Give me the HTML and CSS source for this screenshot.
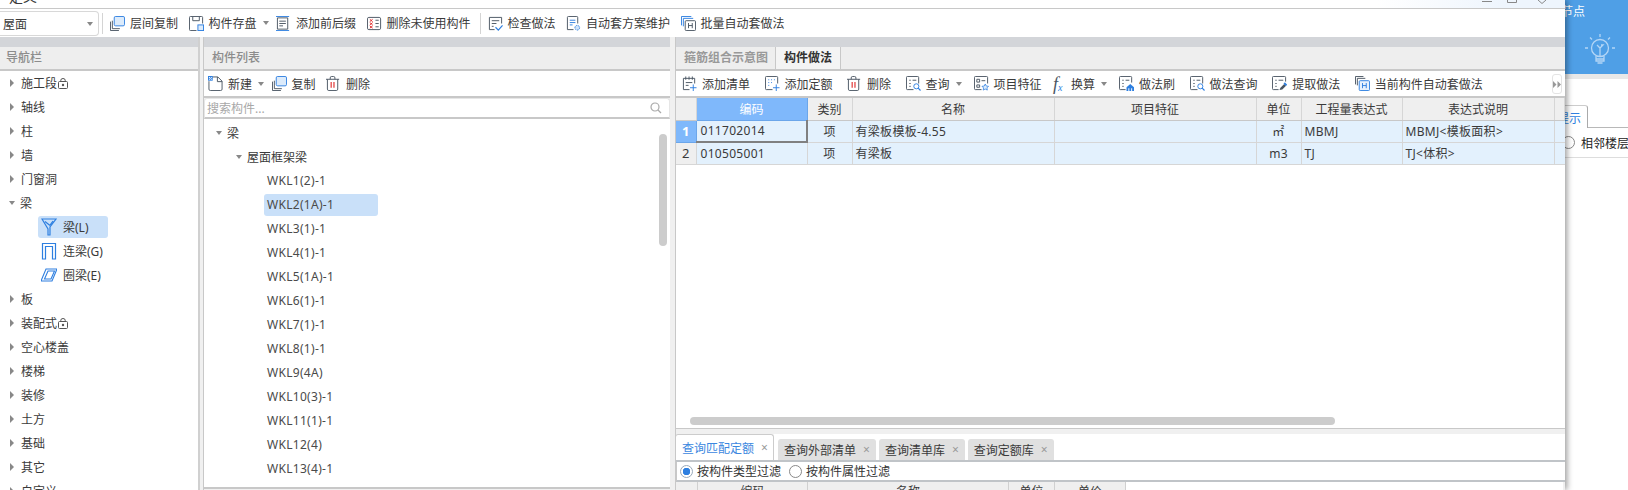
FILE: index.html
```html
<!DOCTYPE html>
<html lang="zh-CN">
<head>
    <meta charset="UTF-8">
    <title>定义</title>
    <link rel="stylesheet" href="styles.css">
</head>
<body>
<svg class="sprite" xmlns="http://www.w3.org/2000/svg">
    <symbol id="i-copy" viewBox="0 0 16 16"><path d="M.5 6v9.500h9M2.500 5v8.500h8" fill="none" stroke="#4a5562"/><rect x="4.500" y=".5" width="11" height="10" rx="1.500" fill="#dcebfb" stroke="#2e7fe0"/></symbol>
    <symbol id="i-save" viewBox="0 0 16 16"><path d="M8 15.500H1.500a1 1 0 0 1-1-1v-13a1 1 0 0 1 1-1h12a1 1 0 0 1 1 1V8M4 1v4h7V1" fill="none" stroke="#4a5562"/><rect x="9.500" y="9.500" width="6" height="6" fill="#dcebfb" stroke="#2e7fe0"/></symbol>
    <symbol id="i-prefix" viewBox="0 0 16 16"><path d="M0 .5h14M0 15.500h14" stroke="#2e7fe0"/><path d="M1.500 2v12h11V2zM3.500 5.500h7M3.500 8h7M3.500 10.500h4" fill="none" stroke="#4a5562"/></symbol>
    <symbol id="i-unused" viewBox="0 0 16 16"><rect x=".5" y="1.500" width="14" height="13" rx="1.500" fill="none" stroke="#4a5562"/><path d="M3 3.500l3 2.500m0-2.500L3 6M3 7l3 2.500M6 7L3 9.500M3 10.500l3 2.500m0-2.500L3 13" stroke="#e02a2a"/><path d="M9 4.500h3.500M9 8h3.500M9 11.500h3.500" stroke="#4a5562"/></symbol>
    <symbol id="i-check" viewBox="0 0 16 16"><path d="M7 14.500H1.500v-13h13V8M4 5h8M4 8h5M4 11h2" fill="none" stroke="#4a5562"/><path d="M8 12l3 3 4.500-5" fill="none" stroke="#2e7fe0" stroke-width="1.300"/></symbol>
    <symbol id="i-auto" viewBox="0 0 16 16"><path d="M8 14.500H1.500v-13a1 1 0 0 1 1-1h9a1 1 0 0 1 1 1V8" fill="none" stroke="#4a5562"/><path d="M4 4.500h6M4 7h6M4 9.500h3" stroke="#2e7fe0"/><circle cx="12" cy="12.500" r="2.500" fill="#cfe3fa" stroke="#2e7fe0" stroke-dasharray="1.500 .8"/></symbol>
    <symbol id="i-batch" viewBox="0 0 16 16"><path d="M.5 10V.5H11M2.500 11V2.500H13" fill="none" stroke="#2e7fe0"/><rect x="4.500" y="5" width="11" height="10.500" rx="1" fill="#fff" stroke="#4a5562"/><path d="M8 7.500v5.500M12 7.500v5.500M8 10.200h4" stroke="#4a5562"/></symbol>
    <symbol id="i-new" viewBox="0 0 16 16"><path d="M4 1H10.500L15 5.500V14a1.500 1.500 0 0 1-1.500 1.500h-11A1.500 1.500 0 0 1 1 14V5.500M10 1v5h5" fill="none" stroke="#4a5562"/><path d="M0 0h5v5H0z" fill="#2e7fe0"/><path d="M1 1h1v1H1zM3 1h1v1H3zM2 2h1v1H2zM1 3h1v1H1zM3 3h1v1H3z" fill="#fff"/></symbol>
    <symbol id="i-trash" viewBox="0 0 16 16"><path d="M0 3.500h14M4.500 3.500V2a1.500 1.500 0 0 1 1.500-1.500h2A1.500 1.500 0 0 1 9.500 2v1.500M1.500 3.500V14A1.500 1.500 0 0 0 3 15.500h8a1.500 1.500 0 0 0 1.500-1.500V3.500" fill="none" stroke="#4a5562"/><path d="M5.500 6.500v6M8.500 6.500v6" stroke="#e02a2a" stroke-width="1.200"/></symbol>
    <symbol id="i-addlist" viewBox="0 0 16 16"><path d="M8 14.500H1.500V2.500h12V8M4 .5v3.500M7.500.5v3.500M11 .5v3.500M4 7h7M4 10h3" fill="none" stroke="#4a5562"/><path d="M12 9v7M8.500 12.500h7" stroke="#2e7fe0"/></symbol>
    <symbol id="i-addquota" viewBox="0 0 16 16"><path d="M8 14.500H1.500a1 1 0 0 1-1-1v-12a1 1 0 0 1 1-1h11a1 1 0 0 1 1 1V8" fill="none" stroke="#4a5562"/><path d="M3.500 4h1M6.500 4h1M9.500 4h1M3.500 7h1M6.500 7h1M3.500 10h1" stroke="#2e7fe0"/><path d="M12 9v7M8.500 12.500h7" stroke="#2e7fe0"/></symbol>
    <symbol id="i-query" viewBox="0 0 16 16"><path d="M8 14.500H1.500a1 1 0 0 1-1-1v-12a1 1 0 0 1 1-1h11a1 1 0 0 1 1 1V8M3.500 4.500H5M7 4.500h4M3.500 8H5M3.500 11H5" fill="none" stroke="#4a5562"/><circle cx="11" cy="11" r="2.700" fill="#fff" stroke="#2e7fe0"/><path d="M13 13l2.500 2.500" stroke="#2e7fe0" stroke-width="1.300"/></symbol>
    <symbol id="i-feature" viewBox="0 0 16 16"><path d="M8 14.500H1.500a1 1 0 0 1-1-1v-12a1 1 0 0 1 1-1h12a1 1 0 0 1 1 1V8" fill="none" stroke="#4a5562"/><path d="M3 3.500h3v3H3zM3 9.500h3v2.500H3zM8 5h4" fill="none" stroke="#4a5562"/><path d="M12 8.500l1.100 2.200 2.400.3-1.700 1.700.4 2.300-2.200-1.100-2.200 1.100.4-2.300-1.700-1.700 2.400-.3z" fill="#dcebfb" stroke="#2e7fe0" stroke-width=".8"/></symbol>
    <symbol id="i-brush" viewBox="0 0 16 16"><path d="M7 14.500H1.500a1 1 0 0 1-1-1v-12a1 1 0 0 1 1-1h11a1 1 0 0 1 1 1V7M3.500 4.500H5M7 4.500h4M3.500 8H5M3.500 11H5" fill="none" stroke="#4a5562"/><path d="M8 12l4-3.500 4 3.500v4H8z" fill="#2e7fe0"/><path d="M10 13h1v3h-1zM13 13h1v3h-1z" fill="#fff"/></symbol>
    <symbol id="i-pick" viewBox="0 0 16 16"><path d="M7 14.500H1.500a1 1 0 0 1-1-1v-12a1 1 0 0 1 1-1h12a1 1 0 0 1 1 1V6M3.500 4.500H5M7 4.500h5M3.500 8H5M3.500 11H5" fill="none" stroke="#4a5562"/><path d="M8 15l1-2.500 4-4 2 2-4 4z" fill="#4a5562"/><path d="M13 7.500l2.500 2.500" stroke="#2e7fe0" stroke-width="2"/></symbol>
    <symbol id="i-current" viewBox="0 0 16 16"><path d="M.5 9V.5H9M2.500 10V2.500H11" fill="none" stroke="#4a5562"/><rect x="4.500" y="5" width="11" height="10.500" rx="1" fill="#e6f1fd" stroke="#2e7fe0"/><path d="M8 7.500v5.500M12 7.500v5.500M8 10.200h4" stroke="#2e7fe0"/></symbol>
    <symbol id="i-lock" viewBox="0 0 10 11"><rect x=".5" y="3.500" width="9" height="7" rx="1" fill="none" stroke="#555"/><path d="M2.800 3.500V2.300a2.200 1.800 0 0 1 4.400 0v1.200" fill="none" stroke="#555"/><circle cx="5" cy="7" r="1.200" fill="#555"/></symbol>
</svg>

<div class="page">
    <div class="window">
        <div class="titlebar">
            <span class="title">定义</span>
            <svg class="win-btns" width="72" height="8" viewBox="0 0 72 8"><path d="M0 1.500h10" stroke="#888"/><path d="M25.500 0v2.500h9V0" fill="none" stroke="#888"/><path d="M56 0l4 3.500 4-3.500" fill="none" stroke="#888"/></svg>
        </div>

        <div class="toolbar main-bar">
            <div class="combo">屋面<span class="arrow"></span></div>
            <span class="sep"></span>
            <span class="tool"><svg class="icon"><use href="#i-copy"/></svg>层间复制</span>
            <span class="tool"><svg class="icon"><use href="#i-save"/></svg>构件存盘<span class="arrow"></span></span>
            <span class="tool"><svg class="icon"><use href="#i-prefix"/></svg>添加前后缀</span>
            <span class="tool"><svg class="icon"><use href="#i-unused"/></svg>删除未使用构件</span>
            <span class="sep tight"></span>
            <span class="tool"><svg class="icon"><use href="#i-check"/></svg>检查做法</span>
            <span class="tool"><svg class="icon"><use href="#i-auto"/></svg>自动套方案维护</span>
            <span class="tool"><svg class="icon"><use href="#i-batch"/></svg>批量自动套做法</span>
        </div>

        <div class="panes">
            <div class="pane nav">
                <div class="band"></div>
                <div class="head">导航栏</div>
                <div class="nav-list">
                    <div class="row"><span class="caret"></span>施工段<svg class="lock"><use href="#i-lock"/></svg></div>
                    <div class="row"><span class="caret"></span>轴线</div>
                    <div class="row"><span class="caret"></span>柱</div>
                    <div class="row"><span class="caret"></span>墙</div>
                    <div class="row"><span class="caret"></span>门窗洞</div>
                    <div class="row"><span class="caret open"></span>梁</div>
                    <div class="row sub"><span class="sub-item selected"><svg class="beam" viewBox="0 0 16 18"><path d="M1 1h14L9 9v8H7v-6L1 1zM4 3.500l5 4M12 3L9 7" fill="none" stroke="#2e7fe0" stroke-width="1.200"/></svg>梁(L)</span></div>
                    <div class="row sub"><span class="sub-item"><svg class="beam" viewBox="0 0 16 18"><path d="M1.500 17V1.500h13V17h-3V4.500h-7V17z" fill="none" stroke="#2e7fe0" stroke-width="1.200"/></svg>连梁(G)</span></div>
                    <div class="row sub"><span class="sub-item"><svg class="beam" viewBox="0 0 16 18"><path d="M5 3h11l-5 12H0zM7 5h6.500l-3.500 8H3.500z" fill="none" stroke="#2e7fe0" stroke-width="1.100"/></svg>圈梁(E)</span></div>
                    <div class="row"><span class="caret"></span>板</div>
                    <div class="row"><span class="caret"></span>装配式<svg class="lock"><use href="#i-lock"/></svg></div>
                    <div class="row"><span class="caret"></span>空心楼盖</div>
                    <div class="row"><span class="caret"></span>楼梯</div>
                    <div class="row"><span class="caret"></span>装修</div>
                    <div class="row"><span class="caret"></span>土方</div>
                    <div class="row"><span class="caret"></span>基础</div>
                    <div class="row"><span class="caret"></span>其它</div>
                    <div class="row"><span class="caret"></span>自定义</div>
                </div>
            </div>

            <div class="split"></div>

            <div class="pane list">
                <div class="band"></div>
                <div class="head list-head">构件列表</div>
                <div class="toolbar sub-bar">
                    <span class="tool"><svg class="icon"><use href="#i-new"/></svg>新建<span class="arrow"></span></span>
                    <span class="tool"><svg class="icon"><use href="#i-copy"/></svg>复制</span>
                    <span class="tool"><svg class="icon"><use href="#i-trash"/></svg>删除</span>
                </div>
                <div class="search">
                    <span>搜索构件...</span>
                    <svg width="12" height="12" viewBox="0 0 12 12"><circle cx="5" cy="5" r="4" fill="none" stroke="#aaa" stroke-width="1.200"/><path d="M8 8l3 3" stroke="#aaa" stroke-width="1.200"/></svg>
                </div>
                <div class="tree">
                    <div class="row lvl1"><span class="caret open"></span>梁</div>
                    <div class="row lvl2"><span class="caret open"></span>屋面框架梁</div>
                    <div class="row lvl3"><span>WKL1(2)-1</span></div>
                    <div class="row lvl3"><span class="selected">WKL2(1A)-1</span></div>
                    <div class="row lvl3"><span>WKL3(1)-1</span></div>
                    <div class="row lvl3"><span>WKL4(1)-1</span></div>
                    <div class="row lvl3"><span>WKL5(1A)-1</span></div>
                    <div class="row lvl3"><span>WKL6(1)-1</span></div>
                    <div class="row lvl3"><span>WKL7(1)-1</span></div>
                    <div class="row lvl3"><span>WKL8(1)-1</span></div>
                    <div class="row lvl3"><span>WKL9(4A)</span></div>
                    <div class="row lvl3"><span>WKL10(3)-1</span></div>
                    <div class="row lvl3"><span>WKL11(1)-1</span></div>
                    <div class="row lvl3"><span>WKL12(4)</span></div>
                    <div class="row lvl3"><span>WKL13(4)-1</span></div>
                    <div class="row lvl3"><span>WKL14(4)-1</span></div>
                    <div class="vbar"></div>
                </div>
            </div>

            <div class="split split-right"></div>

            <div class="pane work">
                <div class="band"></div>
                <div class="head tabs-head">
                    <span class="head-tab">箍筋组合示意图</span>
                    <span class="head-tab active">构件做法</span>
                </div>
                <div class="toolbar sub-bar work-bar">
                    <span class="tool"><svg class="icon"><use href="#i-addlist"/></svg>添加清单</span>
                    <span class="tool"><svg class="icon"><use href="#i-addquota"/></svg>添加定额</span>
                    <span class="tool"><svg class="icon"><use href="#i-trash"/></svg>删除</span>
                    <span class="tool"><svg class="icon"><use href="#i-query"/></svg>查询<span class="arrow"></span></span>
                    <span class="tool"><svg class="icon"><use href="#i-feature"/></svg>项目特征</span>
                    <span class="tool"><i class="fx">f<sub>x</sub></i>换算<span class="arrow"></span></span>
                    <span class="tool"><svg class="icon"><use href="#i-brush"/></svg>做法刷</span>
                    <span class="tool"><svg class="icon"><use href="#i-query"/></svg>做法查询</span>
                    <span class="tool"><svg class="icon"><use href="#i-pick"/></svg>提取做法</span>
                    <span class="tool"><svg class="icon"><use href="#i-current"/></svg>当前构件自动套做法</span>
                    <span class="more"><svg width="8" height="7" viewBox="0 0 8 7"><path d="M0 0l3.500 3.500L0 7zM4.500 0L8 3.500 4.500 7z" fill="#999"/></svg></span>
                </div>

                <div class="grid-area">
                    <table class="grid">
                        <colgroup>
                            <col class="c-no"><col class="c-code"><col class="c-type"><col class="c-name"><col class="c-name">
                            <col class="c-type"><col class="c-expr"><col class="c-desc"><col>
                        </colgroup>
                        <tr>
                            <th></th><th class="on">编码</th><th>类别</th><th>名称</th><th>项目特征</th><th>单位</th><th>工程量表达式</th><th>表达式说明</th><th></th>
                        </tr>
                        <tr>
                            <th class="on num">1</th><td class="cur">011702014</td><td class="mid">项</td><td>有梁板模板-4.55</td><td></td><td class="mid">㎡</td><td>MBMJ</td><td>MBMJ&lt;模板面积&gt;</td><td></td>
                        </tr>
                        <tr>
                            <th class="num">2</th><td>010505001</td><td class="mid">项</td><td>有梁板</td><td></td><td class="mid">m3</td><td>TJ</td><td>TJ&lt;体积&gt;</td><td></td>
                        </tr>
                    </table>
                    <div class="hbar"></div>
                </div>

                <div class="lower">
                    <div class="low-tabs">
                        <span class="low-tab active">查询匹配定额<b>×</b></span>
                        <span class="low-tab">查询外部清单<b>×</b></span>
                        <span class="low-tab">查询清单库<b>×</b></span>
                        <span class="low-tab">查询定额库<b>×</b></span>
                    </div>
                    <div class="filter">
                        <span class="radio checked"></span><span class="radio-text">按构件类型过滤</span>
                        <span class="radio"></span><span class="radio-text">按构件属性过滤</span>
                    </div>
                    <div class="low-head">
                        <span class="lh-no"></span>
                        <span class="lh-code">编码</span>
                        <span class="lh-name">名称</span>
                        <span class="lh-unit">单位</span>
                        <span class="lh-price">单价</span>
                    </div>
                </div>
            </div>
        </div>
    </div>

    <div class="side">
        <div class="side-top">
            <div class="side-title">节点</div>
            <svg class="bulb" width="32" height="34" viewBox="0 0 32 34" fill="none" stroke="#b4d6f6" stroke-width="1.300">
                <circle cx="16" cy="15" r="8.500"/>
                <path d="M12 23v5h8v-5M12.500 26h7M13.500 30h5M13 12l3 3 3-3-2 0M16 15v8"/>
                <path d="M16 1v3M6 4.500l2 2M26 4.500l-2 2M1 15h3M28 15h3"/>
            </svg>
        </div>
        <div class="side-gap"></div>
        <div class="side-tabs"><span class="side-tab">提示</span></div>
        <div class="side-row"><span class="radio side-radio"></span>相邻楼层</div>
    </div>
</div>
</body>
</html>
```

FILE: styles.css
```css
* {
    box-sizing: border-box;
}
body {
    margin: 0;
    font-family: "Noto Sans", "Noto Sans CJK SC", sans-serif;
    font-size: 12px;
    color: #3a3a3a;
    background: #fff;
    overflow: hidden;
}
.sprite {
    display: none;
}
.page {
    display: flex;
    width: 1628px;
    height: 490px;
    overflow: hidden;
}
.window {
    flex: none;
    width: 1565px;
    height: 490px;
    background: #fff;
    box-shadow: 2px 0 6px rgba(0, 0, 0, .4);
    position: relative;
    z-index: 1;
}

/* title strip, cut off by the crop */
.titlebar {
    height: 9px;
    border-bottom: 1px solid #c8c8c8;
    overflow: hidden;
    display: flex;
    justify-content: space-between;
    background: linear-gradient(90deg, #fff 88%, #eef5fd 96%);
}
.title {
    font-size: 14px;
    line-height: 14px;
    margin: -10px 0 0 9px;
}
.win-btns {
    margin-right: 11px;
}

/* toolbars */
.toolbar {
    display: flex;
    align-items: center;
    white-space: nowrap;
    background: #fff;
}
.main-bar {
    height: 28px;
}
.combo {
    width: 99px;
    height: 25px;
    margin-top: 1px;
    padding: 0 5px 0 3px;
    border: 1px solid #d8d8d8;
    border-left: 0;
    border-radius: 0 4px 4px 0;
    display: flex;
    align-items: center;
    justify-content: space-between;
}
.sep {
    width: 1px;
    height: 21px;
    background: #d4d4d4;
    margin: 0 7px 0 3px;
}
.sep.tight {
    margin-left: -1.5px;
}
.tool {
    display: flex;
    align-items: center;
    margin-right: 10.5px;
}
.icon {
    width: 15px;
    height: 15px;
    margin-right: 5px;
    flex: none;
}
.arrow {
    width: 0;
    height: 0;
    margin-left: 6px;
    margin-right: -3px;
    border: 3px solid transparent;
    border-top: 4px solid #888;
    border-bottom: 0;
}
.combo .arrow {
    margin: 0;
}
.sub-bar {
    height: 26px;
    border-bottom: 1px solid #c8c8c8;
    padding-left: 5px;
}
.work-bar {
    position: relative;
    padding-left: 6px;
    margin-bottom: 0;
}
.work-bar .tool {
    margin-right: 14.5px;
}
.work-bar .arrow {
    margin-right: -2.5px;
}
.fx {
    font-family: "Liberation Serif", serif;
    font-size: 18px;
    line-height: 16px;
    color: #4a5562;
    width: 15px;
    margin: 0 3px 0 -3px;
}
.fx sub {
    font-size: 10px;
    color: #2e7fe0;
    line-height: 0;
    vertical-align: -1px;
}
.more {
    position: absolute;
    left: 876px;
    top: 3px;
    width: 10px;
    height: 20px;
    border: 1px solid #e4e4e4;
    border-radius: 3px;
    display: flex;
    align-items: center;
    justify-content: center;
}
.more svg {
    flex: none;
}

/* panes */
.panes {
    display: grid;
    grid-template-columns: 198px 5px 467px 6px 889px;
    height: 453px;
}
.pane {
    display: flex;
    flex-direction: column;
    min-width: 0;
    overflow: hidden;
}
.band {
    height: 10px;
    flex: none;
    background: #d3d5d9;
}
.head {
    height: 24px;
    flex: none;
    padding-left: 6px;
    line-height: 22px;
    font-weight: 500;
    color: #8c8c8c;
    background: #eee;
    border-bottom: 2px solid #c8c8c8;
}
.split {
    background: #f0f0f0;
    border-left: 2px solid #d0d0d0;
}
.split-right {
    border-left: 0;
    border-right: 1px solid #c8c8c8;
}

/* nav tree */
.nav-list {
    flex: 1;
    overflow: hidden;
}
.row {
    height: 24px;
    display: flex;
    align-items: center;
    white-space: nowrap;
}
.nav-list .row {
    padding-left: 10px;
}
.caret {
    width: 0;
    height: 0;
    margin-right: 7px;
    border-style: solid;
    border-width: 4px 0 4px 4px;
    border-color: transparent transparent transparent #888;
}
.caret.open {
    margin-left: -1px;
    margin-right: 5px;
    border-width: 4px 3.5px 0;
    border-color: #888 transparent transparent;
}
.nav-list .row.sub {
    padding-left: 38px;
}
.sub-item {
    display: flex;
    align-items: center;
    width: 70px;
    height: 22px;
    padding-left: 3px;
    border-radius: 3px;
}
.selected {
    background: #c9e0f9;
}
.beam {
    width: 16px;
    height: 18px;
    margin-right: 6px;
}
.lock {
    width: 10px;
    height: 11px;
    margin-left: 1px;
}

/* component list */
.list {
    border-left: 1px solid #c8c8c8;
    background: #f0f0f0;
}
.list-head {
    padding-left: 8px;
}
.list .sub-bar {
    flex: none;
    height: 27px;
    border-bottom: 2px solid #c8c8c8;
    padding-left: 4px;
}
.search {
    height: 21px;
    flex: none;
    padding: 0 7px 0 2px;
    color: #a8a8a8;
    background: #fff;
    border: 1px solid #e6e6e6;
    border-bottom: 2px solid #c8c8c8;
    border-radius: 3px 3px 0 0;
    display: flex;
    align-items: center;
    justify-content: space-between;
}
.tree {
    position: relative;
    height: 370px;
    flex: none;
    padding-top: 2px;
    overflow: hidden;
    background: #fff;
    border-bottom: 2px solid #c8c8c8;
}
.lvl1 {
    padding-left: 13px;
}
.lvl2 {
    padding-left: 33px;
}
.lvl3 {
    padding-left: 60px;
}
.lvl3 span {
    display: block;
    width: 114px;
    height: 22px;
    line-height: 21px;
    padding-left: 3px;
    border-radius: 3px;
    color: #4a4a4a;
    letter-spacing: .3px;
}
.vbar {
    position: absolute;
    left: 455px;
    top: 15px;
    width: 8px;
    height: 112px;
    background: #ccc;
    border-radius: 4px;
}

/* quantity grid */
.tabs-head {
    display: flex;
    padding-left: 0;
    line-height: 21px;
}
.head-tab {
    width: 100px;
    height: 22px;
    padding-left: 8px;
    color: #999;
    font-weight: 700;
    border-right: 1px solid #c8c8c8;
}
.head-tab.active {
    width: 65px;
    color: #333;
    background: #f4f4f4;
}
.work-bar {
    flex: none;
    height: 27px;
    border-bottom: 2px solid #c8c8c8;
}
.grid-area {
    height: 331px;
    flex: none;
    display: flex;
    flex-direction: column;
    border-bottom: 1px solid #c8c8c8;
}
.grid {
    width: 889px;
    table-layout: fixed;
    border-collapse: collapse;
}
.c-no { width: 20px; }
.c-code { width: 111px; }
.c-type { width: 45px; }
.c-name { width: 202px; }
.c-expr { width: 101px; }
.c-desc { width: 152px; }
.grid th,
.grid td {
    height: 22px;
    padding: 0 3px;
    border-right: 1px solid #d6d6d6;
    border-bottom: 1px solid #d6d6d6;
    white-space: nowrap;
    overflow: hidden;
}
.grid th {
    background: #efefef;
    font-weight: 400;
    border-bottom-color: #c8c8c8;
}
.grid th.num {
    font-size: 13px;
    border-bottom-color: #d6d6d6;
}
.grid th.on {
    background: #7fb8fb;
    color: #fff;
    border-color: #6ba6ea;
}
.grid th.on.num {
    font-weight: 700;
}
.grid td {
    background: #e3f1fd;
    letter-spacing: .3px;
}
.grid td.cur {
    padding-left: 4px;
    border-right: 2px solid #808080;
    border-bottom: 2px solid #808080;
}
.grid th.num + td {
    padding-left: 4px;
}
.grid td.mid {
    text-align: center;
}
.grid td:last-child {
    border-right: 0;
}
.hbar {
    width: 645px;
    height: 8px;
    margin: auto 0 3px 14px;
    background: #ccc;
    border-radius: 4px;
}

/* lower query panel */
.lower {
    flex: 1;
    min-height: 0;
    background: #f0f0f0;
    padding-top: 5px;
}
.low-tabs {
    display: flex;
    align-items: flex-end;
    height: 28px;
    background: #fff;
    border-bottom: 2px solid #c0c4c8;
}
.low-tab {
    height: 21px;
    margin-right: 3px;
    padding: 0 6px;
    display: flex;
    align-items: center;
    background: #e0e0e0;
    border-radius: 3px 3px 0 0;
    white-space: nowrap;
}
.low-tab b {
    font-weight: 400;
    font-size: 12px;
    color: #999;
    margin-left: 7px;
}
.low-tab.active {
    height: 26px;
    width: 99px;
    margin: 0 4px 0 -1px;
    color: #3b87e0;
    background: #fff;
    border: 1px solid #ccc;
    border-bottom: 0;
}
.filter {
    height: 20px;
    display: flex;
    align-items: center;
    padding-left: 3px;
    background: #fff;
    border-left: 1px solid #c8c8c8;
    border-bottom: 2px solid #c0c4c8;
}
.radio {
    width: 13px;
    height: 13px;
    flex: none;
    margin-right: 4px;
    border: 1px solid #888;
    border-radius: 50%;
    background: #fff;
}
.radio.checked {
    border-color: #9ab;
    background: radial-gradient(circle, #2e7fe0 0 3.500px, #fff 4px);
}
.radio-text {
    margin-right: 8px;
    color: #333;
}
.low-head {
    display: flex;
    height: 20px;
    margin-right: 2px;
    line-height: 20px;
    background: #fff;
    text-align: center;
}
.low-head span {
    flex: none;
    background: #efefef;
    border-right: 1px solid #d0d0d0;
}
.lh-no { width: 22px; }
.lh-code { width: 110px; }
.lh-name { width: 201px; }
.lh-unit { width: 46px; }
.lh-price { width: 71px; }

/* window behind */
.side {
    flex: none;
    width: 63px;
    overflow: hidden;
}
.side-top {
    height: 74px;
    background: #4f9fe6;
    overflow: hidden;
}
.side-title {
    width: 20px;
    direction: rtl;
    white-space: nowrap;
    color: #fff;
    line-height: 16px;
    padding-top: 4px;
    overflow: hidden;
}
.bulb {
    display: block;
    margin: 13px 0 0 19px;
}
.side-gap {
    height: 31px;
    background: linear-gradient(#e8e8e8 5px, #fff 5px);
}
.side-tabs {
    height: 23px;
    border-bottom: 1px solid #b8b8b8;
    display: flex;
}
.side-tab {
    width: 23px;
    height: 23px;
    direction: rtl;
    white-space: nowrap;
    overflow: hidden;
    padding-right: 6px;
    line-height: 25px;
    color: #2e7fe0;
    background: #fff;
    border-top: 1px solid #ccc;
    border-right: 1px solid #aaa;
    border-radius: 0 3px 0 0;
}
.side-row {
    height: 30px;
    display: flex;
    align-items: center;
    white-space: nowrap;
    margin-left: -3px;
    color: #222;
    border-bottom: 1px solid #ddd;
}
.side-radio {
    margin-right: 6px;
}
```
